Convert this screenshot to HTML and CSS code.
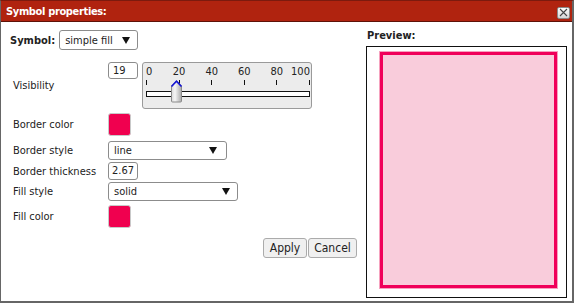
FILE: index.html
```html
<!DOCTYPE html>
<html lang="en">
<head>
    <meta charset="UTF-8">
    <title>Symbol properties</title>
    <link rel="stylesheet" href="styles.css">
</head>
<body>
    <div class="dialog">
        <div class="titlebar">
            <span class="title">Symbol properties:</span>
            <button class="close" title="Close">
                <svg width="9" height="9" viewBox="0 0 9 9"><path d="M1 1 L8 8 M8 1 L1 8" stroke="#444" stroke-width="1.1" fill="none"/></svg>
            </button>
        </div>

        <div class="content">
            <div class="left">
                <!-- Symbol type -->
                <div class="symbol-row">
                    <span class="bold-label">Symbol:</span>
                    <div class="select select-symbol">
                        <span>simple fill</span>
                        <svg class="arrow" width="8" height="7" viewBox="0 0 8 7"><path d="M0 0 H8 L4 7 Z" fill="#111"/></svg>
                    </div>
                </div>

                <!-- Visibility -->
                <div class="form-row row-visibility">
                    <label>Visibility</label>
                    <div class="input input-small">19</div>
                    <div class="slider">
                        <div class="scale">
                            <div class="scale-labels">
                                <span class="first">0</span>
                                <span>20</span>
                                <span>40</span>
                                <span>60</span>
                                <span>80</span>
                                <span class="last">100</span>
                            </div>
                            <div class="ticks">
                                <i></i><i></i><i></i><i></i><i></i><i></i>
                            </div>
                            <div class="track"></div>
                            <svg class="thumb" style="left: 19%" width="13" height="23" viewBox="0 0 13 23">
                                <defs>
                                    <linearGradient id="thumbGrad" x1="0" y1="0" x2="1" y2="0">
                                        <stop offset="0" stop-color="#d8d8d8"/>
                                        <stop offset="0.35" stop-color="#f6f6f6"/>
                                        <stop offset="1" stop-color="#a9a9a9"/>
                                    </linearGradient>
                                </defs>
                                <path d="M1.5 6 L6.5 1 L11.5 6 V21 Q11.5 22 10.5 22 H2.5 Q1.5 22 1.5 21 Z" fill="url(#thumbGrad)" stroke="#8a8a8a" stroke-width="1"/>
                                <path d="M1.5 6.5 L6.5 1.2 L11.5 6.5" fill="none" stroke="#1414d6" stroke-width="1.6"/>
                            </svg>
                        </div>
                    </div>
                </div>

                <!-- Border -->
                <div class="form-row row-swatch">
                    <label>Border color</label>
                    <div class="swatch"></div>
                </div>
                <div class="form-row row-select">
                    <label>Border style</label>
                    <div class="select select-border">
                        <span>line</span>
                        <svg class="arrow" width="8" height="7" viewBox="0 0 8 7"><path d="M0 0 H8 L4 7 Z" fill="#111"/></svg>
                    </div>
                </div>
                <div class="form-row row-input">
                    <label>Border thickness</label>
                    <div class="input input-thick">2.67</div>
                </div>

                <!-- Fill -->
                <div class="form-row row-fillstyle">
                    <label>Fill style</label>
                    <div class="select select-fill">
                        <span>solid</span>
                        <svg class="arrow" width="8" height="7" viewBox="0 0 8 7"><path d="M0 0 H8 L4 7 Z" fill="#111"/></svg>
                    </div>
                </div>
                <div class="form-row">
                    <label>Fill color</label>
                    <div class="swatch"></div>
                </div>

                <div class="actions">
                    <button class="btn btn-apply">Apply</button>
                    <button class="btn btn-cancel">Cancel</button>
                </div>
            </div>

            <div class="right">
                <div class="bold-label preview-label">Preview:</div>
                <div class="preview">
                    <div class="shape"></div>
                </div>
            </div>
        </div>
    </div>
</body>
</html>
```

FILE: styles.css
```css
* {
    margin: 0;
    padding: 0;
    box-sizing: border-box;
}

body {
    font-family: "DejaVu Sans Condensed", "DejaVu Sans", sans-serif;
    font-size: 11px;
    color: #222;
    background: #fff;
}

.dialog {
    width: 574px;
    height: 303px;
    border-top: 1px solid #7c1a0e;
    border-left: 1px solid #666;
    border-right: 2px solid #666;
    border-bottom: 2px solid #666;
    background: #fff;
}

.titlebar {
    height: 21px;
    background: #b0230f;
    border-bottom: 1px solid #5e1208;
    display: flex;
    align-items: center;
    justify-content: space-between;
    padding: 0 2px 0 5px;
}

.title {
    color: #fff;
    font-weight: bold;
    font-size: 11px;
    letter-spacing: -0.35px;
}

.close {
    width: 13px;
    height: 12px;
    margin-top: 3px;
    border: 1px solid #8a8a8a;
    border-radius: 2px;
    background: linear-gradient(#fdfdfd, #d6d6d6);
    display: flex;
    align-items: center;
    justify-content: center;
}

.close svg {
    display: block;
}

.content {
    display: flex;
}

.left {
    width: 357px;
    padding: 8px 0 0 9px;
}

.right {
    width: 201px;
    margin-left: 8px;
    padding-top: 7px;
}

.bold-label {
    font-weight: bold;
    font-size: 11px;
}

.symbol-row {
    display: flex;
    align-items: center;
    gap: 4px;
    margin-bottom: 12px;
}

/* selects and inputs */
.select {
    height: 20px;
    border: 1px solid #8c8c8c;
    border-radius: 3px;
    background: #fff;
    display: flex;
    align-items: center;
    justify-content: space-between;
    padding: 0 9px 0 5px;
}

.select-symbol {
    width: 79px;
    padding-right: 7px;
}

.select-border {
    width: 119px;
    height: 19px;
}

.select-fill {
    width: 130px;
    height: 19px;
    padding-right: 7px;
}

.arrow {
    display: block;
}

.input {
    height: 18px;
    border: 1px solid #8c8c8c;
    border-radius: 3px;
    background: #fff;
    padding: 0 3px;
    line-height: 16px;
}

.input-small {
    width: 30px;
    height: 17px;
    margin-right: 4px;
    line-height: 15px;
    padding-left: 4px;
}

.input-thick {
    width: 30px;
}

/* form rows */
.form-row {
    display: flex;
    align-items: center;
    padding-left: 3px;
    margin-bottom: 4px;
}

.form-row label {
    width: 95px;
    flex-shrink: 0;
}

.row-visibility {
    align-items: flex-start;
}

.row-visibility label {
    align-self: center;
}

.row-swatch {
    margin-bottom: 5px;
}

.row-select,
.row-input {
    margin-bottom: 2px;
}

.swatch {
    width: 23px;
    height: 23px;
    background: #f0004f;
    border: 1px solid #c9c9c9;
    border-radius: 3px;
}

/* slider */
.slider {
    width: 170px;
    height: 47px;
    background: #ececec;
    border: 1px solid #9a9a9a;
    border-radius: 3px;
    padding: 3px 0 0 3px;
}

.scale {
    position: relative;
    width: 164px;
}

.scale-labels {
    display: flex;
    justify-content: space-between;
    height: 12px;
    line-height: 12px;
}

.scale-labels span {
    width: 1px;
    display: flex;
    justify-content: center;
    white-space: nowrap;
}

.scale-labels .first {
    justify-content: flex-start;
}

.scale-labels .last {
    justify-content: flex-end;
}

.ticks {
    display: flex;
    justify-content: space-between;
    height: 5px;
    margin-top: 2px;
}

.ticks i {
    width: 1px;
    background: #111;
}

.track {
    height: 6px;
    margin-top: 6px;
    width: 164px;
    border: 1px solid #111;
    background: #fff;
}

.thumb {
    position: absolute;
    top: 14px;
    margin-left: -7px;
    display: block;
}

/* buttons */
.actions {
    display: flex;
    justify-content: flex-end;
    gap: 1px;
    margin-top: 10px;
    padding-right: 1px;
}

.btn {
    height: 20px;
    border: 1px solid #ababab;
    border-radius: 3px;
    background: #f0f0f0;
    font-family: "DejaVu Sans Condensed", "DejaVu Sans", sans-serif;
    font-size: 12px;
    color: #222;
}

.btn-apply {
    width: 44px;
}

.btn-cancel {
    width: 49px;
}

/* preview */
.preview-label {
    height: 14px;
    line-height: 14px;
    margin: 0 0 3px 1px;
}

.preview {
    width: 201px;
    height: 252px;
    border: 1px solid #111;
    padding: 5px 0 0 13px;
}

.shape {
    width: 177px;
    height: 236px;
    background: #f9ccdb;
    border: 3px solid #f0005a;
    box-shadow: 0 0 0 1px #f6a2bf;
}
```
